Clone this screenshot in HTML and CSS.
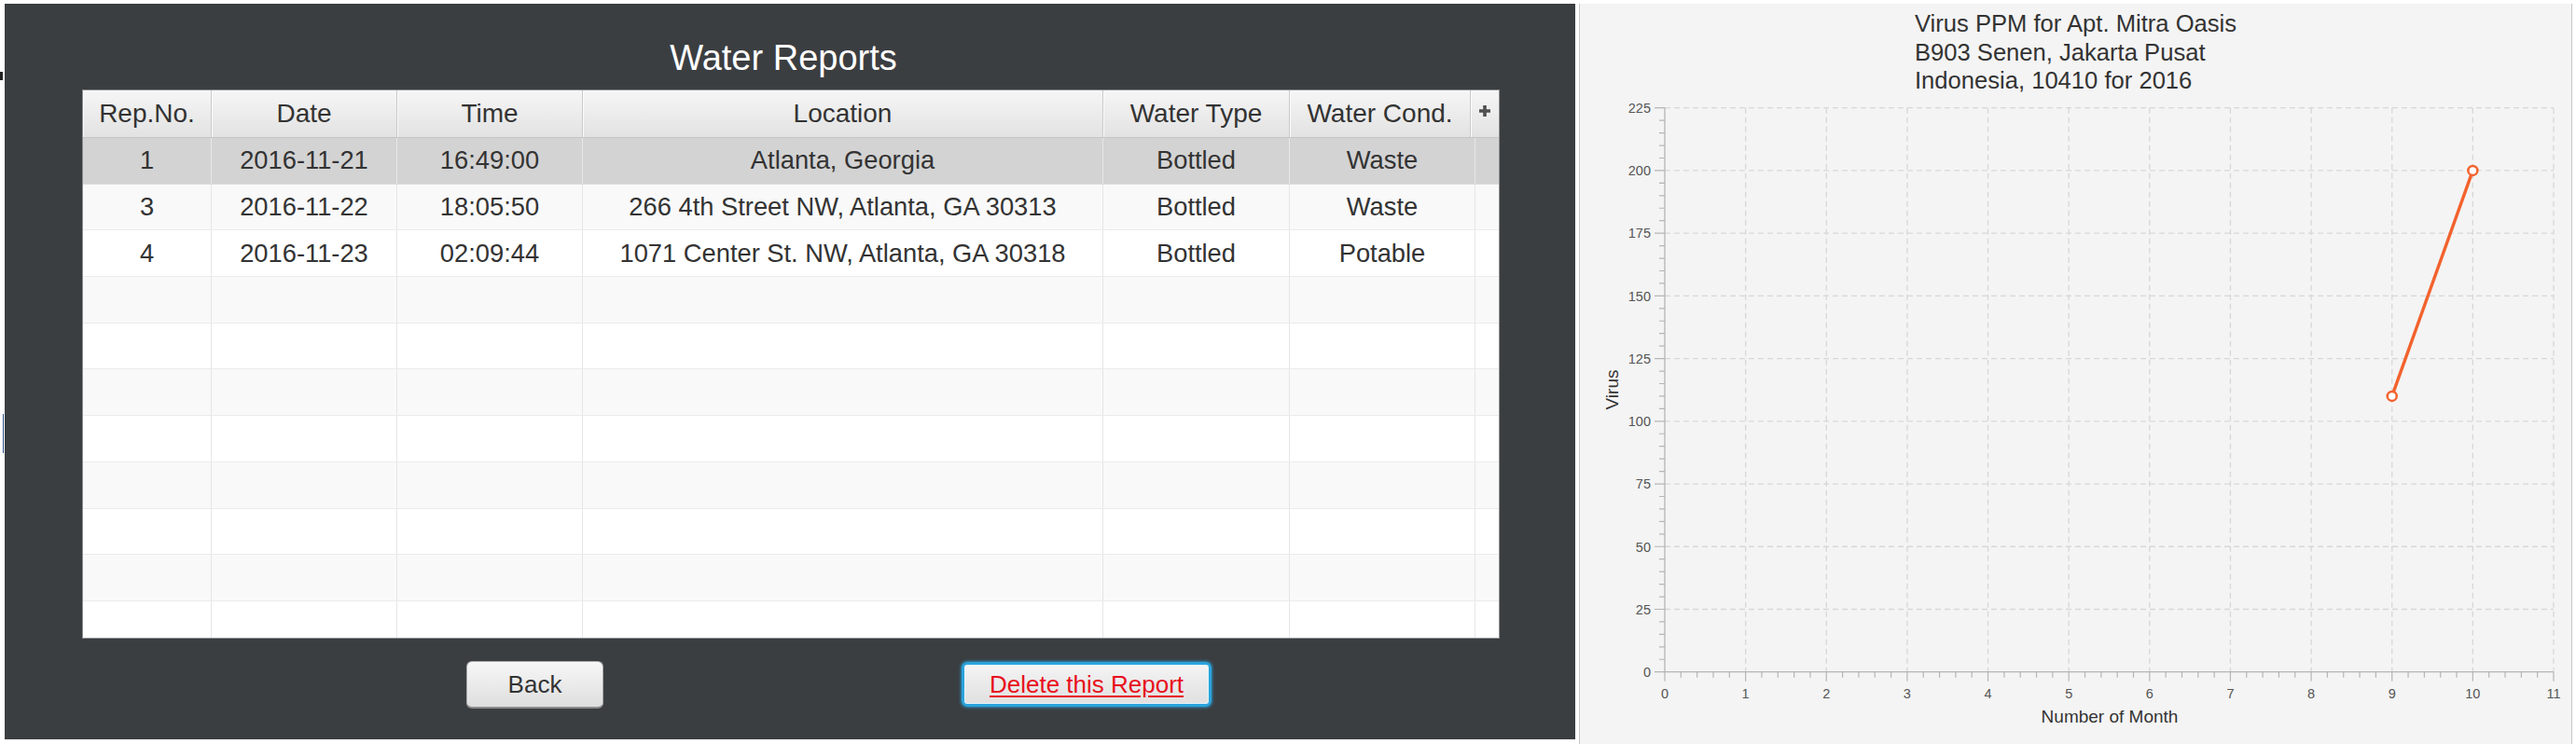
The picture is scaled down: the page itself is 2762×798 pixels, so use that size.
FILE: index.html
```html
<!DOCTYPE html>
<html>
<head>
<meta charset="utf-8">
<title>Water Reports</title>
<link rel="stylesheet" href="styles.css">
</head>
<body>
<div class="screen">
  <div class="edge"><div class="mark-dark"></div><div class="mark-blue"></div></div>
  <section class="reports">
    <h1 class="title">Water Reports</h1>
    <div class="table">
      <div class="thead">
        <div class="th w1">Rep.No.</div>
        <div class="th w2">Date</div>
        <div class="th w3">Time</div>
        <div class="th w4">Location</div>
        <div class="th w5">Water Type</div>
        <div class="th w6h">Water Cond.</div>
        <div class="th corner"><svg class="plus" width="14" height="14" viewBox="0 0 14 14"><path d="M7 1V13M1 7H13"/></svg></div>
      </div>
      <div class="tbody">
        <div class="tr sel"><div class="td w1">1</div><div class="td w2">2016-11-21</div><div class="td w3">16:49:00</div><div class="td w4">Atlanta, Georgia</div><div class="td w5">Bottled</div><div class="td w6">Waste</div><div class="td filler"></div></div>
        <div class="tr"><div class="td w1">3</div><div class="td w2">2016-11-22</div><div class="td w3">18:05:50</div><div class="td w4">266 4th Street NW, Atlanta, GA 30313</div><div class="td w5">Bottled</div><div class="td w6">Waste</div><div class="td filler"></div></div>
        <div class="tr"><div class="td w1">4</div><div class="td w2">2016-11-23</div><div class="td w3">02:09:44</div><div class="td w4">1071 Center St. NW, Atlanta, GA 30318</div><div class="td w5">Bottled</div><div class="td w6">Potable</div><div class="td filler"></div></div>
        <div class="tr"><div class="td w1"></div><div class="td w2"></div><div class="td w3"></div><div class="td w4"></div><div class="td w5"></div><div class="td w6"></div><div class="td filler"></div></div>
        <div class="tr"><div class="td w1"></div><div class="td w2"></div><div class="td w3"></div><div class="td w4"></div><div class="td w5"></div><div class="td w6"></div><div class="td filler"></div></div>
        <div class="tr"><div class="td w1"></div><div class="td w2"></div><div class="td w3"></div><div class="td w4"></div><div class="td w5"></div><div class="td w6"></div><div class="td filler"></div></div>
        <div class="tr"><div class="td w1"></div><div class="td w2"></div><div class="td w3"></div><div class="td w4"></div><div class="td w5"></div><div class="td w6"></div><div class="td filler"></div></div>
        <div class="tr"><div class="td w1"></div><div class="td w2"></div><div class="td w3"></div><div class="td w4"></div><div class="td w5"></div><div class="td w6"></div><div class="td filler"></div></div>
        <div class="tr"><div class="td w1"></div><div class="td w2"></div><div class="td w3"></div><div class="td w4"></div><div class="td w5"></div><div class="td w6"></div><div class="td filler"></div></div>
        <div class="tr"><div class="td w1"></div><div class="td w2"></div><div class="td w3"></div><div class="td w4"></div><div class="td w5"></div><div class="td w6"></div><div class="td filler"></div></div>
        <div class="tr"><div class="td w1"></div><div class="td w2"></div><div class="td w3"></div><div class="td w4"></div><div class="td w5"></div><div class="td w6"></div><div class="td filler"></div></div>
      </div>
    </div>
    <div class="actions">
      <button class="btn back">Back</button>
      <button class="btn delete">Delete this Report</button>
    </div>
  </section>
  <section class="chart">
    <div class="chart-title">
      <div>Virus PPM for Apt. Mitra Oasis</div>
      <div>B903 Senen, Jakarta Pusat</div>
      <div>Indonesia, 10410 for 2016</div>
    </div>
    <svg class="plot" width="1063" height="694" viewBox="0 0 1063 694">
      <path class="grid" d="M91 549.48H1044M91 482.26H1044M91 415.03H1044M91 347.81H1044M91 280.59H1044M91 213.37H1044M91 146.14H1044M91 78.92H1044M91 11.7H1044"/>
      <path class="grid" d="M177.64 11.7V616.7M264.27 11.7V616.7M350.91 11.7V616.7M437.55 11.7V616.7M524.18 11.7V616.7M610.82 11.7V616.7M697.45 11.7V616.7M784.09 11.7V616.7M870.73 11.7V616.7M957.36 11.7V616.7M1044 11.7V616.7"/>
      <path class="axis" d="M91 11.7V616.7H1044"/>
      <path class="tick" d="M85 603.26h6M85 589.81h6M85 576.37h6M85 562.92h6M85 536.03h6M85 522.59h6M85 509.14h6M85 495.7h6M85 468.81h6M85 455.37h6M85 441.92h6M85 428.48h6M85 401.59h6M85 388.14h6M85 374.7h6M85 361.26h6M85 334.37h6M85 320.92h6M85 307.48h6M85 294.03h6M85 267.14h6M85 253.7h6M85 240.26h6M85 226.81h6M85 199.92h6M85 186.48h6M85 173.03h6M85 159.59h6M85 132.7h6M85 119.26h6M85 105.81h6M85 92.37h6M85 65.48h6M85 52.03h6M85 38.59h6M85 25.14h6"/>
      <path class="tick" d="M80 616.7h11M80 549.48h11M80 482.26h11M80 415.03h11M80 347.81h11M80 280.59h11M80 213.37h11M80 146.14h11M80 78.92h11M80 11.7h11"/>
      <path class="tick" d="M108.33 616.7v6M125.65 616.7v6M142.98 616.7v6M160.31 616.7v6M194.96 616.7v6M212.29 616.7v6M229.62 616.7v6M246.95 616.7v6M281.6 616.7v6M298.93 616.7v6M316.25 616.7v6M333.58 616.7v6M368.24 616.7v6M385.56 616.7v6M402.89 616.7v6M420.22 616.7v6M454.87 616.7v6M472.2 616.7v6M489.53 616.7v6M506.85 616.7v6M541.51 616.7v6M558.84 616.7v6M576.16 616.7v6M593.49 616.7v6M628.15 616.7v6M645.47 616.7v6M662.8 616.7v6M680.13 616.7v6M714.78 616.7v6M732.11 616.7v6M749.44 616.7v6M766.76 616.7v6M801.42 616.7v6M818.75 616.7v6M836.07 616.7v6M853.4 616.7v6M888.05 616.7v6M905.38 616.7v6M922.71 616.7v6M940.04 616.7v6M974.69 616.7v6M992.02 616.7v6M1009.35 616.7v6M1026.67 616.7v6"/>
      <path class="tick" d="M91 616.7v10M177.64 616.7v10M264.27 616.7v10M350.91 616.7v10M437.55 616.7v10M524.18 616.7v10M610.82 616.7v10M697.45 616.7v10M784.09 616.7v10M870.73 616.7v10M957.36 616.7v10M1044 616.7v10"/>
      <g class="ylabels">
        <text x="76" y="16.9">225</text>
        <text x="76" y="84.1">200</text>
        <text x="76" y="151.3">175</text>
        <text x="76" y="218.6">150</text>
        <text x="76" y="285.8">125</text>
        <text x="76" y="353">100</text>
        <text x="76" y="420.2">75</text>
        <text x="76" y="487.5">50</text>
        <text x="76" y="554.7">25</text>
        <text x="76" y="621.9">0</text>
      </g>
      <g class="xlabels">
        <text x="91" y="644.5">0</text>
        <text x="177.64" y="644.5">1</text>
        <text x="264.27" y="644.5">2</text>
        <text x="350.91" y="644.5">3</text>
        <text x="437.55" y="644.5">4</text>
        <text x="524.18" y="644.5">5</text>
        <text x="610.82" y="644.5">6</text>
        <text x="697.45" y="644.5">7</text>
        <text x="784.09" y="644.5">8</text>
        <text x="870.73" y="644.5">9</text>
        <text x="957.36" y="644.5">10</text>
        <text x="1044" y="644.5">11</text>
      </g>
      <text class="axis-title" x="568" y="671">Number of Month</text>
      <text class="axis-title" transform="translate(41 314) rotate(-90)">Virus</text>
      <path class="series" d="M870.73 320.92L957.36 78.92"/>
      <circle class="marker" cx="870.73" cy="320.92" r="5"/>
      <circle class="marker" cx="957.36" cy="78.92" r="5"/>
    </svg>
  </section>
</div>
</body>
</html>
```

FILE: styles.css
```css
html, body {
  margin: 0;
  padding: 0;
  background: #ffffff;
}
body {
  width: 2762px;
  height: 798px;
  overflow: hidden;
  font-family: "Liberation Sans", Arial, sans-serif;
}
.screen {
  display: flex;
  align-items: flex-start;
  padding-top: 4px;
  height: 798px;
  box-sizing: border-box;
}
.edge {
  width: 5px;
  flex: none;
  display: flex;
  flex-direction: column;
}
.mark-dark {
  margin-top: 73px;
  width: 3px;
  height: 9px;
  background: #222222;
}
.mark-blue {
  margin: 358px 0 0 3px;
  width: 1px;
  height: 42px;
  background: #2c4f8c;
}
.reports {
  flex: none;
  width: 1684px;
  height: 789px;
  background: #3b3e41;
  display: flex;
  flex-direction: column;
}
.title {
  margin: 0;
  padding: 38px 14px 0 0;
  height: 40px;
  line-height: 40px;
  font-size: 38px;
  font-weight: normal;
  color: #ffffff;
  text-align: center;
}
.table {
  margin: 14px 0 0 83px;
  width: 1520px;
  height: 589px;
  box-sizing: border-box;
  border: 1px solid #8f8f8f;
  background: #ffffff;
  overflow: hidden;
}
.thead {
  display: flex;
  height: 51px;
  box-sizing: border-box;
  border-bottom: 1px solid #c4c4c4;
  background: linear-gradient(#f6f6f6, #e2e2e2);
}
.th {
  flex: none;
  box-sizing: border-box;
  border-right: 1px solid #c9c9c9;
  box-shadow: inset 1px 1px 0 #fbfbfb;
  display: flex;
  align-items: center;
  justify-content: center;
  font-size: 28px;
  color: #333333;
  white-space: nowrap;
}
.tr {
  display: flex;
  height: 49.7px;
  box-sizing: border-box;
  border-bottom: 1px solid #ebebeb;
  background: #ffffff;
}
.tr:nth-child(even) {
  background: #f9f9f9;
}
.tr.sel {
  background: #d3d3d3;
  border-bottom-color: #dcdcdc;
}
.td {
  flex: none;
  box-sizing: border-box;
  border-right: 1px solid #e6e6e6;
  display: flex;
  align-items: center;
  justify-content: center;
  font-size: 27.3px;
  color: #333333;
  white-space: nowrap;
}
.w1 { width: 138px; }
.w2 { width: 199px; }
.w3 { width: 199px; }
.w4 { width: 558px; }
.w5 { width: 200px; }
.w6h { width: 194px; }
.w6 { width: 199px; }
.th.corner {
  width: 30px;
  border-right: none;
  padding-bottom: 6px;
}
.td.filler {
  width: 25px;
  border-right: none;
}
.plus path {
  stroke: #4f4f4f;
  stroke-width: 3.6;
  fill: none;
}
.actions {
  display: flex;
  align-items: flex-start;
  margin-top: 24px;
  padding-left: 495px;
  gap: 384px;
}
.btn {
  font-family: "Liberation Sans", Arial, sans-serif;
  font-size: 26px;
  padding: 0;
  margin: 0;
  box-sizing: border-box;
  cursor: default;
}
.back {
  width: 147px;
  height: 51px;
  border: 1px solid #a9a9a9;
  border-bottom: 2px solid #8c8c8c;
  border-radius: 6px;
  background: linear-gradient(#f7f7f7, #dedede);
  color: #333333;
}
.delete {
  width: 268px;
  height: 48px;
  margin-top: 1px;
  border: 3px solid #2aa3dc;
  border-radius: 6px;
  box-shadow: 0 0 3px 1px rgba(40, 170, 230, 0.7), inset 0 0 0 1px #e4f3fa;
  background: linear-gradient(#f4f4f4, #e0e0e0);
  color: #e8101c;
  text-decoration: underline;
  text-underline-offset: 3px;
}
.chart {
  flex: none;
  margin-left: 4px;
  width: 1065px;
  height: 794px;
  box-sizing: border-box;
  border-left: 1px solid #c6c6c6;
  border-right: 1px solid #c6c6c6;
  background: #f4f4f4;
  display: flex;
  flex-direction: column;
}
.chart-title {
  align-self: center;
  box-sizing: border-box;
  height: 100px;
  padding-top: 6px;
  font-size: 25.6px;
  line-height: 30.5px;
  color: #333333;
}
.plot {
  display: block;
  flex: none;
}
.grid {
  fill: none;
  stroke: #d7d7d7;
  stroke-width: 1.3;
  stroke-dasharray: 6 4;
}
.axis {
  fill: none;
  stroke: #b5b5b5;
  stroke-width: 1.3;
}
.tick {
  fill: none;
  stroke: #b5b5b5;
  stroke-width: 1.2;
}
.ylabels text {
  font-family: "Liberation Sans", Arial, sans-serif;
  font-size: 14.5px;
  fill: #555555;
  text-anchor: end;
}
.xlabels text {
  font-family: "Liberation Sans", Arial, sans-serif;
  font-size: 14.5px;
  fill: #555555;
  text-anchor: middle;
}
.axis-title {
  font-family: "Liberation Sans", Arial, sans-serif;
  font-size: 19px;
  fill: #333333;
  text-anchor: middle;
}
.series {
  fill: none;
  stroke: #f3622d;
  stroke-width: 3.4;
}
.marker {
  fill: #ffffff;
  stroke: #f3622d;
  stroke-width: 2.5;
}
```
